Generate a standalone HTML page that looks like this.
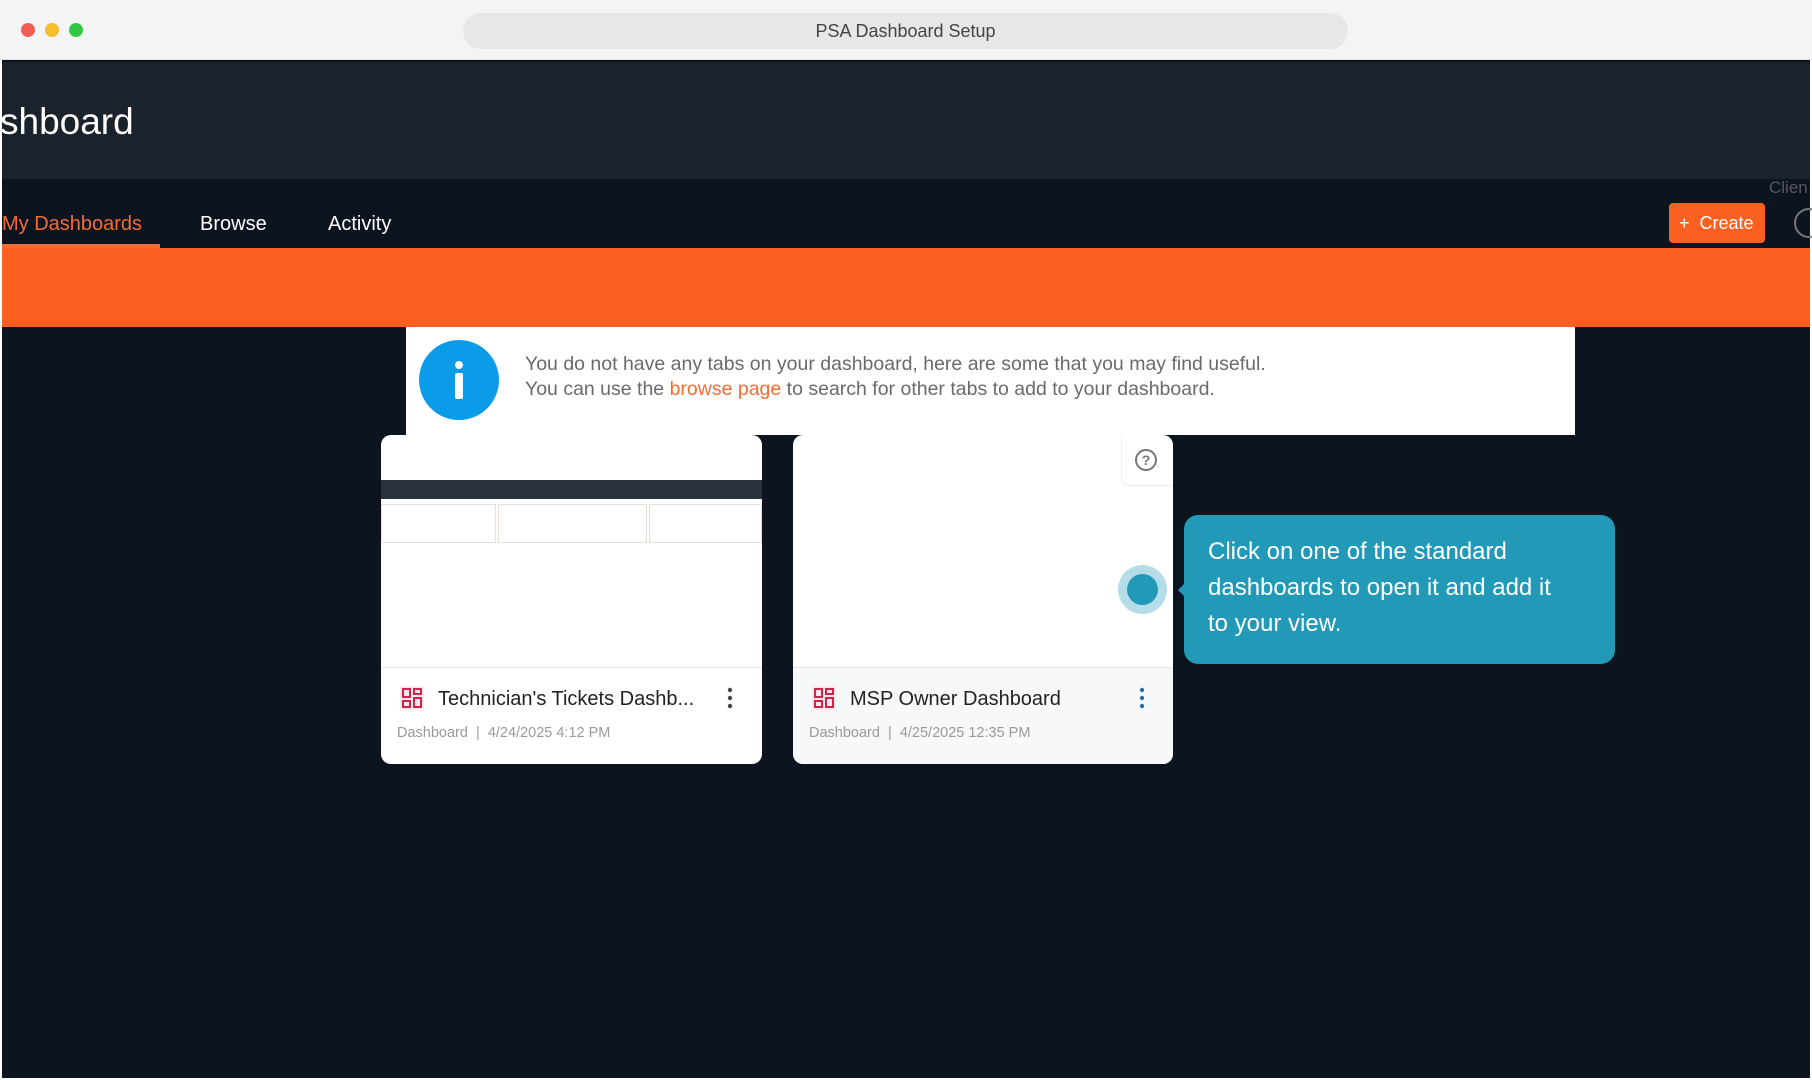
<!DOCTYPE html>
<html><head><meta charset="utf-8"><style>
*{margin:0;padding:0;box-sizing:border-box}
body{width:1812px;height:1080px;background:#fff;font-family:"Liberation Sans",sans-serif;position:relative;overflow:hidden}
.a{position:absolute}
</style></head><body>
<div class="a" style="left:0;top:0;width:1812px;height:60px;background:#f3f4f5;border-bottom:1px solid #ddd"></div>
<div class="a" style="left:21px;top:23px;width:14px;height:14px;border-radius:50%;background:#f25d58"></div>
<div class="a" style="left:45px;top:23px;width:14px;height:14px;border-radius:50%;background:#f8bd2c"></div>
<div class="a" style="left:69px;top:23px;width:14px;height:14px;border-radius:50%;background:#31c740"></div>
<div class="a" style="left:463px;top:13px;width:885px;height:36px;border-radius:18px;background:#e6e7e9;text-align:center;line-height:36px;font-size:18px;color:#444">PSA Dashboard Setup</div>
<div class="a" style="left:2px;top:60px;width:1808px;height:1018px;background:#0c151f"></div>
<div class="a" style="left:2px;top:62px;width:1808px;height:117px;background:#1a222c;overflow:hidden">
 <div class="a" style="left:-2px;top:39px;font-size:37px;color:#fff;white-space:nowrap">shboard</div>
</div>
<div class="a" style="left:2px;top:213px;font-size:20px;color:#f26d35">My Dashboards</div>
<div class="a" style="left:2px;top:244px;width:158px;height:4px;background:#f26d35"></div>
<div class="a" style="left:200px;top:213px;font-size:20px;color:#fff">Browse</div>
<div class="a" style="left:328px;top:213px;font-size:20px;color:#fff">Activity</div>
<div class="a" style="left:1769px;top:178px;font-size:17px;color:#556">Clien</div>
<div class="a" style="left:1669px;top:203px;width:96px;height:40px;background:#fc6020;border-radius:4px;color:#fff;font-size:18px;line-height:40px;padding-left:10px">+&nbsp;&nbsp;Create</div>
<div class="a" style="left:1794px;top:208px;width:30px;height:30px;border:2px solid #777;border-radius:50%"></div>
<div class="a" style="left:2px;top:248px;width:1808px;height:79px;background:#fc6020"></div>
<div class="a" style="left:406px;top:327px;width:1169px;height:108px;background:#fff"></div>
<div class="a" style="left:419px;top:340px;width:80px;height:80px;border-radius:50%;background:#0a9be9"></div>
<div class="a" style="left:455px;top:361px;width:8px;height:8px;border-radius:50%;background:#fff"></div>
<div class="a" style="left:455px;top:373px;width:8px;height:26px;border-radius:2px;background:#fff"></div>
<div class="a" style="left:525px;top:352px;font-size:19.5px;color:#6a6a6a;line-height:25px">You do not have any tabs on your dashboard, here are some that you may find useful.<br>You can use the <span style="color:#f26d35">browse page</span> to search for other tabs to add to your dashboard.</div>
<!-- card1 -->
<div class="a" style="left:381px;top:435px;width:381px;height:329px;background:#fff;border-radius:10px;overflow:hidden">
 <div class="a" style="left:0;top:45px;width:381px;height:19px;background:#2b323c"></div>
 <div class="a" style="left:0;top:69px;width:115px;height:39px;border:1px solid #eadfd4"></div>
 <div class="a" style="left:117px;top:69px;width:149px;height:39px;border:1px solid #eadfd4"></div>
 <div class="a" style="left:268px;top:69px;width:113px;height:39px;border:1px solid #eadfd4"></div>
 <div class="a" style="left:0;top:232px;width:381px;height:1px;background:#e8e8e8"></div>
</div>
<!-- card2 -->
<div class="a" style="left:793px;top:435px;width:380px;height:329px;background:#fff;border-radius:10px;overflow:hidden">
 <div class="a" style="left:0;top:232px;width:380px;height:97px;background:#f7f8fa;border-top:1px solid #e2e4e8"></div>
 <div class="a" style="left:328px;top:0;width:52px;height:51px;border-left:1px solid #eee;border-bottom:1px solid #eee;border-radius:0 0 0 8px"></div>
 <div class="a" style="left:342px;top:14px;width:22px;height:22px;border:2px solid #777;border-radius:50%;font-size:14px;text-align:center;line-height:18px;color:#777;font-weight:bold">?</div>
</div>
<svg class="a" style="left:400px;top:686px" width="24" height="24" viewBox="0 0 24 24"><rect width="24" height="24" rx="3" fill="#fbe8ec"/><g fill="none" stroke="#d3234a" stroke-width="2"><rect x="3" y="3" width="7" height="8"/><rect x="14" y="3" width="7" height="5"/><rect x="3" y="15" width="7" height="6"/><rect x="14" y="12" width="7" height="9"/></g></svg>
<div class="a" style="left:438px;top:688px;font-size:20px;color:#222">Technician's Tickets Dashb...</div>
<div class="a" style="left:397px;top:725px;font-size:14.5px;color:#999">Dashboard&nbsp; | &nbsp;4/24/2025 4:12 PM</div>
<svg class="a" style="left:725px;top:686px" width="10" height="24"><circle cx="5" cy="4" r="2.2" fill="#444"/><circle cx="5" cy="12" r="2.2" fill="#444"/><circle cx="5" cy="20" r="2.2" fill="#444"/></svg>
<svg class="a" style="left:812px;top:686px" width="24" height="24" viewBox="0 0 24 24"><rect width="24" height="24" rx="3" fill="#fbe8ec"/><g fill="none" stroke="#d3234a" stroke-width="2"><rect x="3" y="3" width="7" height="8"/><rect x="14" y="3" width="7" height="5"/><rect x="3" y="15" width="7" height="6"/><rect x="14" y="12" width="7" height="9"/></g></svg>
<div class="a" style="left:850px;top:688px;font-size:20px;color:#222">MSP Owner Dashboard</div>
<div class="a" style="left:809px;top:725px;font-size:14.5px;color:#999">Dashboard&nbsp; | &nbsp;4/25/2025 12:35 PM</div>
<svg class="a" style="left:1137px;top:686px" width="10" height="24"><circle cx="5" cy="4" r="2.2" fill="#1f6fb0"/><circle cx="5" cy="12" r="2.2" fill="#1f6fb0"/><circle cx="5" cy="20" r="2.2" fill="#1f6fb0"/></svg>
<!-- hotspot -->
<div class="a" style="left:1118px;top:565px;width:49px;height:49px;border-radius:50%;background:#b5dde8"></div>
<div class="a" style="left:1127px;top:574px;width:31px;height:31px;border-radius:50%;background:#2399b8"></div>
<div class="a" style="left:1178px;top:582px;width:0;height:0;border-top:8px solid transparent;border-bottom:8px solid transparent;border-right:8px solid #2399b8"></div>
<div class="a" style="left:1184px;top:515px;width:431px;height:149px;background:#2399b8;border-radius:14px;color:#fff;font-size:24px;line-height:36px;padding:19px 44px 20px 24px">Click on one of the standard dashboards to open it and add it to your view.</div>
</body></html>
